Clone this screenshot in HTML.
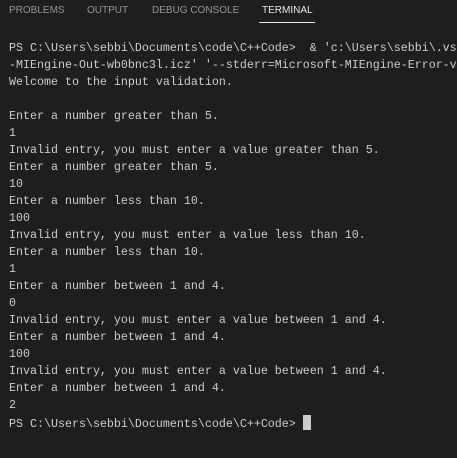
<!DOCTYPE html>
<html><head><style>
html,body{margin:0;padding:0;background:#1e1e1e;width:457px;height:458px;overflow:hidden}
.tab{position:absolute;top:4px;font:10px "Liberation Sans",sans-serif;color:#969696;white-space:nowrap;line-height:14px}
.act{color:#e7e7e7}
.ul{position:absolute;left:259px;top:22px;width:56px;height:1px;background:#e7e7e7}
pre{position:absolute;left:9px;top:39.5px;margin:0;font-family:"Liberation Mono",monospace;font-size:11.66px;line-height:17.05px;color:#cccccc}
.cur{display:inline-block;width:8px;height:15px;background:#cccccc;vertical-align:-3px;margin-left:7px}
</style></head><body>
<div class="tab" style="left:9px">PROBLEMS</div>
<div class="tab" style="left:87px">OUTPUT</div>
<div class="tab" style="left:152px">DEBUG CONSOLE</div>
<div class="tab act" style="left:262px">TERMINAL</div>
<div class="ul"></div>
<pre>PS C:\Users\sebbi\Documents\code\C++Code>  &amp; 'c:\Users\sebbi\.vs
-MIEngine-Out-wb0bnc3l.icz' '--stderr=Microsoft-MIEngine-Error-v
Welcome to the input validation.

Enter a number greater than 5.
1
Invalid entry, you must enter a value greater than 5.
Enter a number greater than 5.
10
Enter a number less than 10.
100
Invalid entry, you must enter a value less than 10.
Enter a number less than 10.
1
Enter a number between 1 and 4.
0
Invalid entry, you must enter a value between 1 and 4.
Enter a number between 1 and 4.
100
Invalid entry, you must enter a value between 1 and 4.
Enter a number between 1 and 4.
2
PS C:\Users\sebbi\Documents\code\C++Code><span class="cur"></span></pre>
</body></html>
